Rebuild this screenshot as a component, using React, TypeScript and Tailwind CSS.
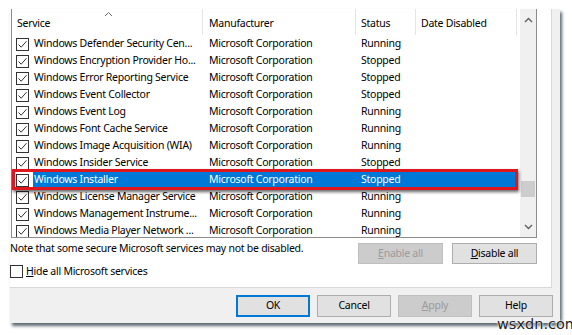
import React from 'react';

type Row = { name: string; status: string; selected?: boolean };

const rows: Row[] = [
    { name: 'Windows Defender Security Cen...', status: 'Running' },
    { name: 'Windows Encryption Provider Ho...', status: 'Stopped' },
    { name: 'Windows Error Reporting Service', status: 'Stopped' },
    { name: 'Windows Event Collector', status: 'Stopped' },
    { name: 'Windows Event Log', status: 'Running' },
    { name: 'Windows Font Cache Service', status: 'Running' },
    { name: 'Windows Image Acquisition (WIA)', status: 'Running' },
    { name: 'Windows Insider Service', status: 'Stopped' },
    { name: 'Windows Installer', status: 'Stopped', selected: true },
    { name: 'Windows License Manager Service', status: 'Running' },
    { name: 'Windows Management Instrume...', status: 'Running' },
    { name: 'Windows Media Player Network ...', status: 'Running' },
];

function CheckBox({ checked }: { checked: boolean }) {
    return (
        <div className="w-[13px] h-[13px] border border-[#333333] bg-white flex items-center justify-center shrink-0">
            {checked && (
                <svg width="11" height="11" viewBox="0 0 11 11">
                    <path d="M1.5 5.5 L4.2 8.2 L9.5 2.2" fill="none" stroke="#333333" strokeWidth="1" />
                </svg>
            )}
        </div>
    );
}

function Chevron({ up }: { up: boolean }) {
    return (
        <svg width="9" height="6" viewBox="0 0 9 6">
            <path d={up ? 'M1 5 L4.5 1.5 L8 5' : 'M1 1 L4.5 4.5 L8 1'} fill="none" stroke="#606060" strokeWidth="1.4" />
        </svg>
    );
}

function Button({ children, disabled, primary, w }: { children: React.ReactNode; disabled?: boolean; primary?: boolean; w: string }) {
    return (
        <div
            className={
                'flex items-center justify-center border ' + w + ' ' +
                (disabled
                    ? 'bg-[#cccccc] border-[#bfbfbf] text-[#9b9b9b]'
                    : primary
                        ? 'bg-[#e1e1e1] border-[#0078d7] border-2 text-black'
                        : 'bg-[#e1e1e1] border-[#adadad] text-black')
            }
        >
            {children}
        </div>
    );
}

export default function App() {
    return (
        <div className="w-[572px] h-[335px] bg-white relative overflow-hidden pl-[10px] pt-[9px] text-[10.5px] tracking-[-0.25px] text-black font-['Noto_Sans','Liberation_Sans',sans-serif]">
            <div className="w-[550px] h-[314px] bg-[#f0f0f0] flex flex-col shadow-[2px_3px_3px_rgba(40,55,65,0.75)]">
                {/* tab page */}
                <div className="w-[542px] h-[279px] bg-white border-r border-b border-[#d9d9d9] flex flex-col">
                    {/* list view */}
                    <div className="ml-[1px] w-[526px] h-[229px] border-l border-r border-b border-[#8c8c8c] flex">
                        <div className="w-[507px] flex flex-col overflow-hidden">
                            <div className="h-[26px] flex shrink-0 relative">
                                <div className="w-[191px] pl-[5px] pt-[7px] border-r border-[#e5e5e5] relative">
                                    Service
                                    <div className="absolute left-[92px] top-[2px]">
                                        <svg width="9" height="6" viewBox="0 0 9 6">
                                            <path d="M1 5 L4.5 1.5 L8 5" fill="none" stroke="#707070" strokeWidth="1" />
                                        </svg>
                                    </div>
                                </div>
                                <div className="w-[153px] pl-[6px] pt-[7px] border-r border-[#e5e5e5]">Manufacturer</div>
                                <div className="w-[60px] pl-[5px] pt-[7px] border-r border-[#e5e5e5]">Status</div>
                                <div className="w-[101px] pl-[5px] pt-[7px] border-r border-[#e5e5e5]">Date Disabled</div>
                            </div>
                            {rows.map((r, i) => (
                                <div key={i} className="h-[17px] flex items-center shrink-0 whitespace-nowrap pt-[1px]">
                                    <div className="w-[21px] pl-[4px] flex items-center shrink-0">
                                        <CheckBox checked />
                                    </div>
                                    <div className={'flex h-full items-center ' + (r.selected ? 'bg-[#0078d7] text-white' : '')}>
                                        <div className="w-[170px] pl-[1px] overflow-hidden">{r.name}</div>
                                        <div className="w-[153px] pl-[6px]">Microsoft Corporation</div>
                                        <div className="w-[60px] pl-[5px]">{r.status}</div>
                                        <div className="w-[101px]" />
                                    </div>
                                </div>
                            ))}
                        </div>
                        {/* scrollbar */}
                        <div className="ml-[1px] w-[16px] bg-[#f0f0f0] flex flex-col items-center">
                            <div className="h-[20px] flex items-center justify-center pt-[2px]">
                                <Chevron up />
                            </div>
                            <div className="flex-1 w-full flex flex-col">
                                <div className="h-[152px]" />
                                <div className="mx-[1px] h-[16px] bg-[#cdcdcd]" />
                            </div>
                            <div className="h-[20px] flex items-center justify-center">
                                <Chevron up={false} />
                            </div>
                        </div>
                    </div>
                    <div className="flex items-start">
                        <div className="mt-[3px] leading-[14px] flex-1">Note that some secure Microsoft services may not be disabled.</div>
                        <div className="mt-[5px] flex gap-[9px] pr-[14px]">
                            <Button w="w-[85px] h-[21px]" disabled><span><u>E</u>nable all</span></Button>
                            <Button w="w-[85px] h-[21px]"><span><u>D</u>isable all</span></Button>
                        </div>
                    </div>
                    <div className="flex items-center gap-[3px]">
                        <CheckBox checked={false} />
                        <span><u>H</u>ide all Microsoft services</span>
                    </div>
                </div>
                {/* footer buttons */}
                <div className="flex justify-end gap-[7px] pt-[7px] pr-[7px]">
                    <Button w="w-[74px] h-[22px]" primary>OK</Button>
                    <Button w="w-[74px] h-[22px]">Cancel</Button>
                    <Button w="w-[74px] h-[22px]" disabled><span><u>A</u>pply</span></Button>
                    <Button w="w-[74px] h-[22px]">Help</Button>
                </div>
            </div>

            {/* annotation box */}
            <div className="absolute left-[12px] top-[169px] w-[506px] h-[21px] border-[3px] border-[#e0161f] shadow-[1px_2px_3px_rgba(0,0,0,0.6)]" />

            {/* watermark */}
            <div className="absolute left-[497px] top-[316px] whitespace-nowrap text-[14.5px] leading-[17px] tracking-normal text-[#222] font-['DejaVu_Sans',sans-serif] [text-shadow:0_0_2px_#fff,0_0_2px_#fff]">
                wsxdn.com
            </div>
        </div>
    );
}
